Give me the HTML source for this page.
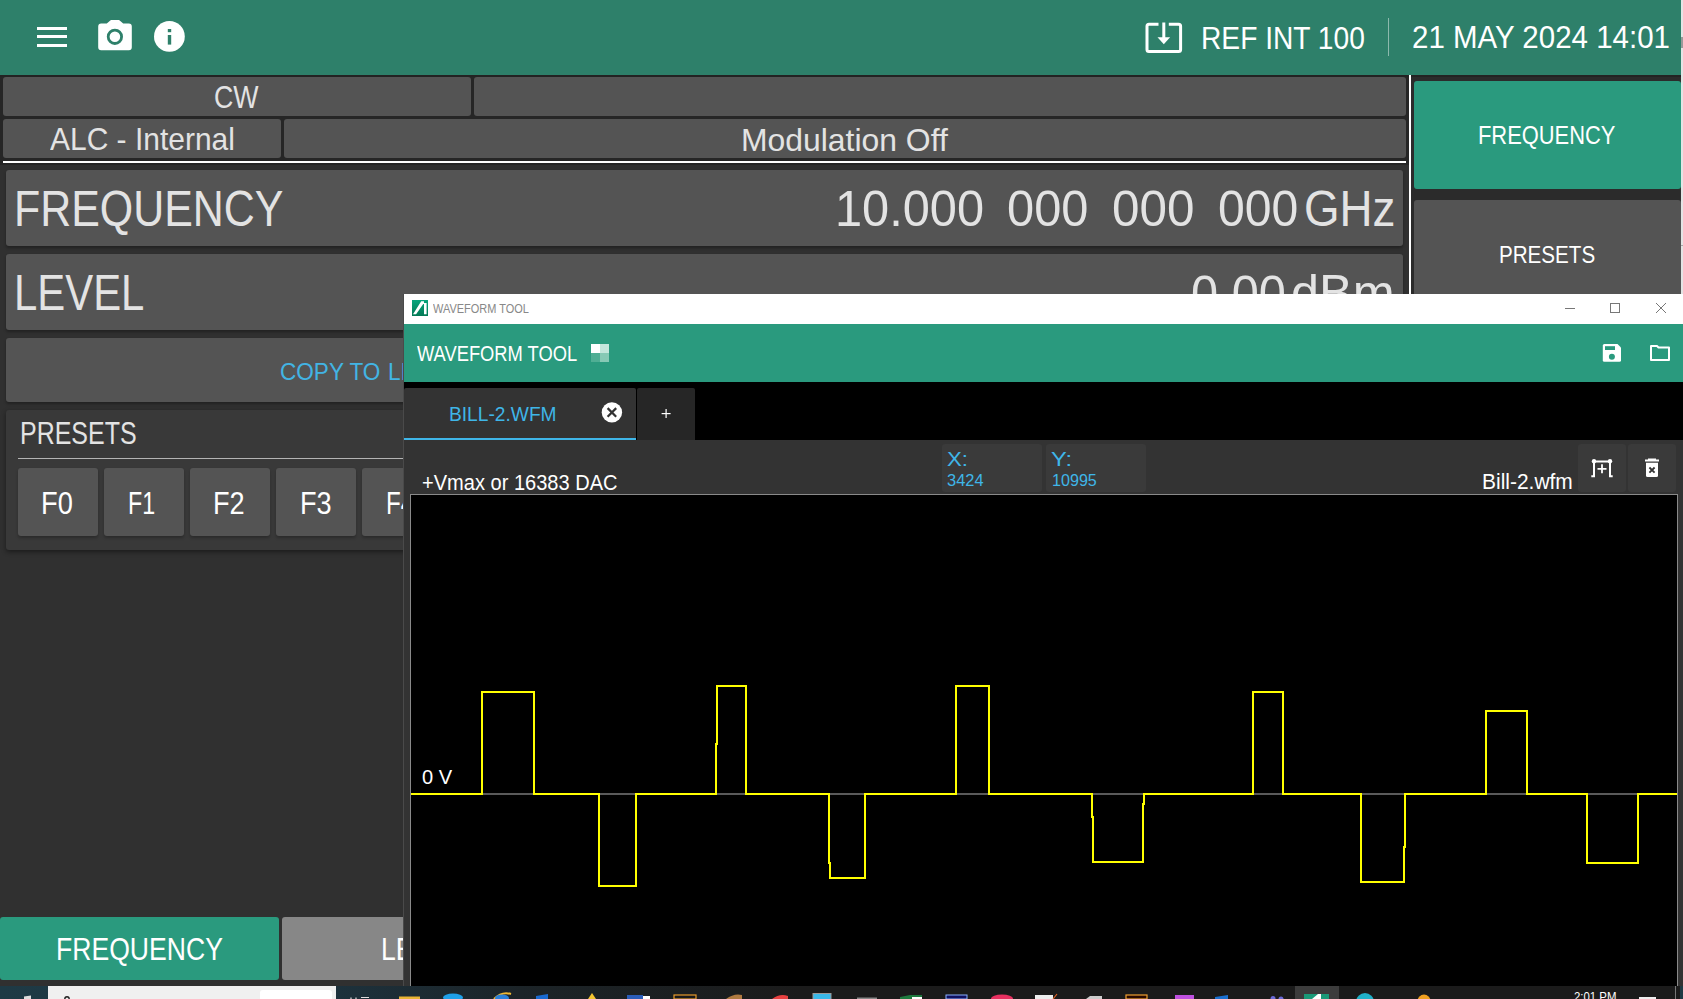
<!DOCTYPE html>
<html><head><meta charset="utf-8">
<style>
*{margin:0;padding:0;box-sizing:border-box}
html,body{width:1683px;height:999px;overflow:hidden;background:#303030;font-family:"Liberation Sans",sans-serif}
.a{position:absolute}
.t{position:absolute;line-height:1;white-space:nowrap;transform-origin:0 0}
.box{position:absolute;background:#545454;border-radius:3px}
.pb{position:absolute;background:#545454;border-radius:3px;box-shadow:0 2px 3px rgba(0,0,0,.25)}
</style></head><body>
<!-- header -->
<div class="a" style="left:0;top:0;width:1683px;height:75px;background:#2e806a"></div>
<div class="a" style="left:0;top:75px;width:1683px;height:2px;background:#232323"></div>
<!-- hamburger -->
<div class="a" style="left:37px;top:27px;width:30px;height:3px;background:#fff"></div>
<div class="a" style="left:37px;top:35px;width:30px;height:3px;background:#fff"></div>
<div class="a" style="left:37px;top:44px;width:30px;height:3px;background:#fff"></div>
<!-- camera -->
<svg class="a" style="left:96px;top:18px" width="40" height="36" viewBox="96 18 40 36">
 <path d="M110.6 20.2 Q111 19.9 111.5 19.9 L118.5 19.9 Q119 19.9 119.4 20.2 L123.2 23.6 L128.8 23.6 Q131.8 23.6 131.8 26.6 L131.8 47.2 Q131.8 50.2 128.8 50.2 L101.2 50.2 Q98.2 50.2 98.2 47.2 L98.2 26.6 Q98.2 23.6 101.2 23.6 L106.8 23.6 Z" fill="#fff"/>
 <circle cx="114.9" cy="36.8" r="6.7" fill="none" stroke="#2e806a" stroke-width="2.8"/>
</svg>
<!-- info -->
<svg class="a" style="left:150px;top:17px" width="40" height="40" viewBox="150 17 40 40">
 <circle cx="169.4" cy="36.4" r="15.4" fill="#fff"/>
 <rect x="167.8" y="29" width="3.4" height="3.2" fill="#2e806a"/>
 <rect x="167.8" y="35" width="3.4" height="9.6" fill="#2e806a"/>
</svg>
<!-- ref icon -->
<svg class="a" style="left:1140px;top:18px" width="48" height="40" viewBox="1140 18 48 40">
 <path d="M1158.5 24.3 L1149 24.3 Q1147 24.3 1147 26.3 L1147 49.5 Q1147 51.5 1149 51.5 L1178.6 51.5 Q1180.6 51.5 1180.6 49.5 L1180.6 26.3 Q1180.6 24.3 1178.6 24.3 L1168.8 24.3" fill="none" stroke="#fff" stroke-width="3"/>
 <rect x="1162.3" y="22.5" width="3" height="17" fill="#fff"/>
 <path d="M1157.5 37.3 L1170.1 37.3 L1163.8 44.3 Z" fill="#fff"/>
</svg>
<div class="a" style="left:1388px;top:18px;width:1px;height:38px;background:rgba(255,255,255,.45)"></div>

<!-- status rows -->
<div class="a" style="left:0;top:77px;width:1409px;height:88px;background:#262626"></div>
<div class="box" style="left:3px;top:77px;width:468px;height:39px"></div>
<div class="box" style="left:474px;top:77px;width:932px;height:39px"></div>
<div class="box" style="left:3px;top:119px;width:278px;height:39px"></div>
<div class="box" style="left:284px;top:119px;width:1122px;height:39px"></div>
<div class="a" style="left:3px;top:161px;width:1403px;height:2px;background:#fff"></div>
<div class="a" style="left:1409px;top:75px;width:2px;height:924px;background:#fff"></div>
<div class="a" style="left:1411px;top:77px;width:269px;height:922px;background:#2b2b2b"></div>

<!-- big rows -->
<div class="box" style="left:6px;top:170px;width:1397px;height:76px;box-shadow:0 2px 3px rgba(0,0,0,.3)"></div>
<div class="box" style="left:6px;top:254px;width:1397px;height:76px;box-shadow:0 2px 3px rgba(0,0,0,.3)"></div>
<div class="box" style="left:6px;top:338px;width:1397px;height:64px;box-shadow:0 2px 3px rgba(0,0,0,.3)"></div>

<!-- presets panel -->
<div class="a" style="left:6px;top:410px;width:1397px;height:140px;background:#393939;border-radius:3px;box-shadow:0 2px 5px rgba(0,0,0,.45)"></div>
<div class="a" style="left:18px;top:458px;width:1380px;height:1px;background:#b4b4b4"></div>
<div class="pb" style="left:18px;top:468px;width:80px;height:68px"></div>
<div class="pb" style="left:104px;top:468px;width:80px;height:68px"></div>
<div class="pb" style="left:190px;top:468px;width:80px;height:68px"></div>
<div class="pb" style="left:276px;top:468px;width:80px;height:68px"></div>
<div class="pb" style="left:362px;top:468px;width:80px;height:68px"></div>

<!-- bottom buttons -->
<div class="a" style="left:0;top:917px;width:279px;height:63px;background:#2a9a7e;border-radius:3px"></div>
<div class="a" style="left:282px;top:917px;width:200px;height:63px;background:#878787;border-radius:3px"></div>

<!-- right panel -->
<div class="a" style="left:1414px;top:81px;width:267px;height:108px;background:#2a9a7e;border-radius:3px"></div>
<div class="a" style="left:1414px;top:200px;width:267px;height:120px;background:#545454;border-radius:3px"></div>
<div class="a" style="left:1681px;top:0;width:2px;height:999px;background:#e4e4e4"></div>
<div class="a" style="left:1681px;top:37px;width:2px;height:11px;background:#9a9a9a"></div>
<div class="a" style="left:1681px;top:245px;width:2px;height:1px;background:#aaa"></div>

<div class="t" style="left:386.05px;top:489.18px;font-size:30.96px;transform:scaleX(0.78);color:#fff">F4</div>
<div class="t" style="left:380.52px;top:935.08px;font-size:30.96px;transform:scaleX(0.8586);color:#fff">LEVEL</div>
<div class="t" style="left:387.55px;top:359.63px;font-size:24.42px;transform:scaleX(0.9246);color:#42b4e4">LIST</div>
<div class="t" style="left:1191.05px;top:269.48px;font-size:49.42px;transform:scaleX(0.9873);color:#e3e3e3">0.00</div>
<div class="t" style="left:1291.05px;top:267.98px;font-size:49.42px;transform:scaleX(1.02);color:#e3e3e3">dBm</div>
<div id="cw" class="t" style="left:213.81px;top:81.96px;font-size:31.10px;transform:scaleX(0.8605);color:#e3e3e3">CW</div>
<div id="alc" class="t" style="left:49.52px;top:125.18px;font-size:30.96px;transform:scaleX(0.9681);color:#e3e3e3">ALC - Internal</div>
<div id="mod" class="t" style="left:740.52px;top:125.58px;font-size:30.96px;transform:scaleX(1.0302);color:#e3e3e3">Modulation Off</div>
<div id="freq" class="t" style="left:13.63px;top:184.29px;font-size:50.87px;transform:scaleX(0.8440);color:#e3e3e3">FREQUENCY</div>
<div id="f1" class="t" style="left:835.35px;top:183.88px;font-size:49.42px;transform:scaleX(0.9864);color:#e3e3e3">10.000</div>
<div id="f2" class="t" style="left:1007.05px;top:183.88px;font-size:49.42px;transform:scaleX(0.9873);color:#e3e3e3">000</div>
<div id="f3" class="t" style="left:1111.75px;top:183.88px;font-size:49.42px;transform:scaleX(1.0002);color:#e3e3e3">000</div>
<div id="f4" class="t" style="left:1217.65px;top:183.88px;font-size:49.42px;transform:scaleX(0.9746);color:#e3e3e3">000</div>
<div id="f5" class="t" style="left:1303.55px;top:183.88px;font-size:49.42px;transform:scaleX(0.9257);color:#e3e3e3">GHz</div>
<div id="level" class="t" style="left:13.93px;top:268.39px;font-size:50.87px;transform:scaleX(0.8235);color:#e3e3e3">LEVEL</div>
<div id="presets" class="t" style="left:19.95px;top:418.41px;font-size:30.67px;transform:scaleX(0.8144);color:#e3e3e3">PRESETS</div>
<div id="b0" class="t" style="left:41.02px;top:489.18px;font-size:30.96px;transform:scaleX(0.8800);color:#ffffff">F0</div>
<div id="b1" class="t" style="left:127.52px;top:489.18px;font-size:30.96px;transform:scaleX(0.7516);color:#ffffff">F1</div>
<div id="b2" class="t" style="left:213.32px;top:489.18px;font-size:30.96px;transform:scaleX(0.8761);color:#ffffff">F2</div>
<div id="b3" class="t" style="left:299.52px;top:489.18px;font-size:30.96px;transform:scaleX(0.8761);color:#ffffff">F3</div>
<div id="copy" class="t" style="left:280.05px;top:359.63px;font-size:24.42px;transform:scaleX(0.9246);color:#42b4e4">COPY TO</div>
<div id="bfreq" class="t" style="left:55.52px;top:935.08px;font-size:30.96px;transform:scaleX(0.8586);color:#ffffff">FREQUENCY</div>
<div id="rfreq" class="t" style="left:1477.97px;top:123.19px;font-size:25.44px;transform:scaleX(0.8599);color:#ffffff">FREQUENCY</div>
<div id="rpres" class="t" style="left:1499.03px;top:243.41px;font-size:24.56px;transform:scaleX(0.8394);color:#ffffff">PRESETS</div>
<div id="ref" class="t" style="left:1200.53px;top:23.59px;font-size:30.81px;transform:scaleX(0.9148);color:#ffffff">REF INT 100</div>
<div id="date" class="t" style="left:1411.51px;top:22.26px;font-size:31.10px;transform:scaleX(0.9484);color:#ffffff">21 MAY 2024 14:01</div>

<!-- window -->
<div class="a" style="left:403px;top:294px;width:1280px;height:692px;background:#333;border-left:1px solid #4a4a4a"></div>
<div class="a" style="left:404px;top:294px;width:1279px;height:30px;background:#fff"></div>
<svg class="a" style="left:412px;top:300px" width="16" height="16" viewBox="0 0 16 16">
 <defs><linearGradient id="g1" x1="0" y1="0" x2="0" y2="1"><stop offset="0" stop-color="#08a47c"/><stop offset="1" stop-color="#037955"/></linearGradient></defs>
 <rect width="16" height="16" fill="url(#g1)"/>
 <path d="M1 14.2 L9.2 1.2 L12 1.2 L12 3 L14.6 3 L14.6 14.2 L12 14.2 L12 4 L11.2 4 L4.1 14.2 Z" fill="#fff"/>
</svg>
<svg class="a" style="left:1560px;top:298px" width="115" height="20" viewBox="1560 298 115 20">
 <rect x="1565" y="308" width="10" height="1" fill="#777"/>
 <rect x="1610.5" y="303.5" width="9" height="9" fill="none" stroke="#777" stroke-width="1"/>
 <path d="M1656 303 L1666 313 M1666 303 L1656 313" stroke="#777" stroke-width="1"/>
</svg>
<div class="a" style="left:404px;top:324px;width:1279px;height:58px;background:#2a9a7e"></div>
<svg class="a" style="left:590px;top:343px" width="20" height="20" viewBox="590 343 20 20">
 <rect x="591" y="344" width="9" height="9" fill="#ffffff"/>
 <rect x="600" y="344" width="9" height="9" fill="#c4e6dc"/>
 <rect x="591" y="353" width="9" height="9" fill="#4fae94"/>
 <rect x="600" y="353" width="9" height="9" fill="#86c9b5"/>
</svg>
<svg class="a" style="left:1600px;top:342px" width="75" height="22" viewBox="1600 342 75 22">
 <path d="M1604.3 344 L1617.5 344 L1621 347.5 L1621 360.3 Q1621 361.8 1619.5 361.8 L1604.3 361.8 Q1602.8 361.8 1602.8 360.3 L1602.8 345.5 Q1602.8 344 1604.3 344 Z" fill="#fff"/>
 <rect x="1605" y="346.2" width="10" height="3.8" fill="#2a9a7e"/>
 <circle cx="1611.9" cy="356.7" r="3" fill="#2a9a7e"/>
 <path d="M1651 346 L1657 346 L1658.5 347.5 L1669 347.5 L1669 360 L1651 360 Z" fill="none" stroke="#fff" stroke-width="2" stroke-linejoin="round"/>
</svg>
<!-- tabs -->
<div class="a" style="left:404px;top:382px;width:1279px;height:58px;background:#000"></div>
<div class="a" style="left:404px;top:388px;width:232px;height:52px;background:#333;border-radius:2px 2px 0 0"></div>
<div class="a" style="left:404px;top:438px;width:232px;height:2px;background:#3fb6e8"></div>
<div class="a" style="left:637px;top:388px;width:58px;height:52px;background:#262626;border-radius:2px 2px 0 0"></div>
<svg class="a" style="left:600px;top:400px" width="100" height="26" viewBox="600 400 100 26">
 <circle cx="611.9" cy="412.4" r="10.2" fill="#fff"/>
 <path d="M607.6 408.1 L616.2 416.7 M616.2 408.1 L607.6 416.7" stroke="#333" stroke-width="2.2"/>
 <rect x="661.6" y="413" width="9" height="1.2" fill="#fff"/>
 <rect x="665.5" y="409" width="1.2" height="9" fill="#fff"/>
</svg>
<!-- content -->
<div class="a" style="left:942px;top:444px;width:100px;height:48px;background:#3a3a3a;border-radius:3px"></div>
<div class="a" style="left:1046px;top:444px;width:100px;height:48px;background:#3a3a3a;border-radius:3px"></div>
<div class="a" style="left:1578px;top:444px;width:48px;height:48px;background:#3a3a3a;border-radius:3px"></div>
<div class="a" style="left:1628px;top:444px;width:48px;height:48px;background:#3a3a3a;border-radius:3px"></div>
<svg class="a" style="left:1585px;top:452px" width="95" height="32" viewBox="1585 452 95 32">
 <path d="M1593.5 461.5 L1610.5 461.5 M1594 461.5 L1594 476.3 L1591.3 476.3 M1610 461.5 L1610 476.3 L1612.7 476.3" fill="none" stroke="#fff" stroke-width="2"/>
 <circle cx="1594" cy="461.3" r="2.2" fill="#fff"/>
 <circle cx="1610" cy="461.3" r="2.2" fill="#fff"/>
 <path d="M1597.5 468.8 L1606.5 468.8 M1602 464.3 L1602 473.3" stroke="#fff" stroke-width="1.8"/>
 <path d="M1645 459.5 L1659 459.5 L1659 461.5 L1645 461.5 Z M1648 458.5 L1656 458.5 L1656 459.6 L1648 459.6 Z" fill="#fff"/>
 <path d="M1646 462.8 L1658 462.8 L1658 475.5 Q1658 477 1656.5 477 L1647.5 477 Q1646 477 1646 475.5 Z" fill="#fff"/>
 <path d="M1649.4 467.5 L1654.6 472.7 M1654.6 467.5 L1649.4 472.7" stroke="#333" stroke-width="1.8"/>
</svg>
<!-- chart -->
<div class="a" style="left:410px;top:494px;width:1268px;height:492px;background:#000;border:1px solid #8a8a8a;border-bottom:none"></div>
<svg class="a" style="left:411px;top:495px" width="1266" height="491" viewBox="411 495 1266 491">
 <g fill="none" stroke="#5a5a5a" stroke-width="2">
  <path d="M482 794 L534 794 M599 794 L636 794 M716 794 L746 794 M829 794 L865 794 M956 794 L989 794 M1092 794 L1144 794 M1253 794 L1283 794 M1361 794 L1405 794 M1486 794 L1527 794 M1587 794 L1638 794"/>
 </g>
 <path fill="none" stroke="#ffff00" stroke-width="2" stroke-linejoin="miter" stroke-linecap="square"
  d="M411 794 L482 794 L482 692 L534 692 L534 794 L599 794 L599 886 L636 886 L636 794 L716 794 L716 744 L717 744 L717 686 L746 686 L746 794 L829 794 L829 863 L830 863 L830 878 L865 878 L865 794 L956 794 L956 686 L989 686 L989 794 L1092 794 L1092 817 L1093 817 L1093 862 L1143 862 L1143 804 L1144 804 L1144 794 L1253 794 L1253 692 L1283 692 L1283 794 L1361 794 L1361 882 L1404 882 L1404 847 L1405 847 L1405 794 L1486 794 L1486 711 L1527 711 L1527 794 L1587 794 L1587 863 L1638 863 L1638 794 L1677 794"/>
</svg>

<!-- taskbar -->
<div class="a" style="left:0;top:986px;width:1683px;height:13px;background:linear-gradient(90deg,#1e3a45 0px,#1d3440 300px,#1c2428 520px,#1b1b1b 800px,#1b1b1b 1683px)"></div>
<div class="a" style="left:48px;top:986px;width:288px;height:13px;background:#f0f0f0"></div>
<div class="a" style="left:260px;top:990px;width:72px;height:9px;background:#fff;border-radius:3px 3px 0 0"></div>
<div class="a" style="left:1295px;top:986px;width:44px;height:13px;background:#3c3c3c"></div>
<svg class="a" style="left:0;top:986px" width="1683" height="13" viewBox="0 986 1683 13">
 <path d="M24 999 L24 996.5 L31 995.5 L31 999 Z" fill="#ddd"/>
 <circle cx="67" cy="999" r="2.2" fill="none" stroke="#222" stroke-width="1.4"/>
 <path d="M351 999 L351 997.5 M356 999 L356 997.5 M361 997.5 L369 997.5" stroke="#ddd" stroke-width="1.2"/>
 <rect x="399" y="996.5" width="21" height="3" fill="#e8b434"/>
 <ellipse cx="453" cy="997.5" rx="10" ry="4" fill="#1fa0e8"/>
 <path d="M494 999 Q502 991 511 994" stroke="#f0b830" stroke-width="2" fill="none"/>
 <ellipse cx="502" cy="998" rx="7" ry="3.5" fill="#2a80d8"/>
 <path d="M536 996 L548 994 L548 999 L536 999 Z" fill="#1a6ad0"/>
 <path d="M588 999 L592 993 L596 999 Z" fill="#f4c430"/>
 <rect x="627" y="995" width="16" height="4" fill="#2a5cb8"/><rect x="643" y="996" width="7" height="3" fill="#fff"/>
 <rect x="674" y="995" width="22" height="4" fill="#1a1a1a" stroke="#e89a2a" stroke-width="1.2"/>
 <path d="M726 999 Q734 993 742 995 L742 999 Z" fill="#b07a40"/>
 <path d="M772 999 Q780 993 788 996 L788 999 Z" fill="#e84040"/>
 <rect x="813" y="993.5" width="18" height="6" fill="#3ab8e8" stroke="#999" stroke-width="1"/>
 <rect x="857" y="997.5" width="20" height="2" fill="#888"/>
 <path d="M900 997 L910 995 L922 995 L922 999 L900 999 Z" fill="#1e7a3e"/><rect x="912" y="997" width="10" height="2" fill="#fff"/>
 <rect x="946" y="995" width="21" height="4" fill="#101060" stroke="#8ab0ff" stroke-width="1"/>
 <ellipse cx="1002" cy="998.5" rx="11" ry="4" fill="#e83060"/>
 <rect x="1035" y="995" width="18" height="4" fill="#eee"/><path d="M1053 999 L1057 994" stroke="#e06020" stroke-width="1.2"/>
 <path d="M1086 999 L1090 996 L1102 996 L1102 999 Z" fill="#ccc"/>
 <rect x="1126" y="995" width="21" height="4" fill="#2a0a00" stroke="#f0a030" stroke-width="1.2"/>
 <rect x="1175" y="995" width="19" height="4" fill="#c050e0"/>
 <path d="M1215 997 L1228 995 L1228 999 L1215 999 Z" fill="#1a70d0"/>
 <circle cx="1273" cy="998.5" r="2.5" fill="#6a6ad8"/><circle cx="1281" cy="999" r="2.5" fill="#6a6ad8"/>
 <rect x="1304" y="994" width="25" height="5" fill="#1a9a78"/><path d="M1312 999 L1318 994 L1321 994 L1321 999" fill="#fff"/>
 <circle cx="1365" cy="1002" r="9" fill="#20b0c8"/>
 <circle cx="1424" cy="1001" r="6.5" fill="#f0a020"/>
 <rect x="1639" y="997" width="17" height="2" fill="#eee"/>
 <rect x="1675" y="986" width="1" height="13" fill="#777"/>
</svg>
<div class="t" style="left:1574px;top:991px;font-size:12px;color:#fff;transform:scaleX(0.95)">2:01 PM</div>
<div class="a" style="left:1680px;top:986px;width:3px;height:13px;background:#1e3a44"></div>

<div id="wtitle" class="t" style="left:433.41px;top:303.09px;font-size:12.35px;transform:scaleX(0.8879);color:#888888">WAVEFORM TOOL</div>
<div id="whead" class="t" style="left:416.69px;top:344.02px;font-size:21.37px;transform:scaleX(0.8574);color:#ffffff">WAVEFORM TOOL</div>
<div id="tab" class="t" style="left:448.85px;top:403.72px;font-size:20.64px;transform:scaleX(0.9292);color:#3fb6e8">BILL-2.WFM</div>
<div id="xl" class="t" style="left:947.13px;top:448.88px;font-size:20.93px;transform:scaleX(1.0632);color:#3fb6e8">X:</div>
<div id="yl" class="t" style="left:1051.33px;top:448.88px;font-size:20.93px;transform:scaleX(1.1294);color:#3fb6e8">Y:</div>
<div id="xv" class="t" style="left:947.45px;top:473.01px;font-size:16.86px;transform:scaleX(0.9747);color:#3fb6e8">3424</div>
<div id="yv" class="t" style="left:1051.65px;top:473.01px;font-size:16.86px;transform:scaleX(0.9556);color:#3fb6e8">10995</div>
<div id="vmax" class="t" style="left:422.26px;top:472.17px;font-size:21.80px;transform:scaleX(0.9195);color:#ffffff">+Vmax or 16383 DAC</div>
<div id="bill" class="t" style="left:1481.87px;top:471.48px;font-size:21.66px;transform:scaleX(0.9678);color:#ffffff">Bill-2.wfm</div>
<div id="zv" class="t" style="left:421.94px;top:767.30px;font-size:20.78px;transform:scaleX(0.9676);color:#ffffff">0 V</div>
</body></html>
